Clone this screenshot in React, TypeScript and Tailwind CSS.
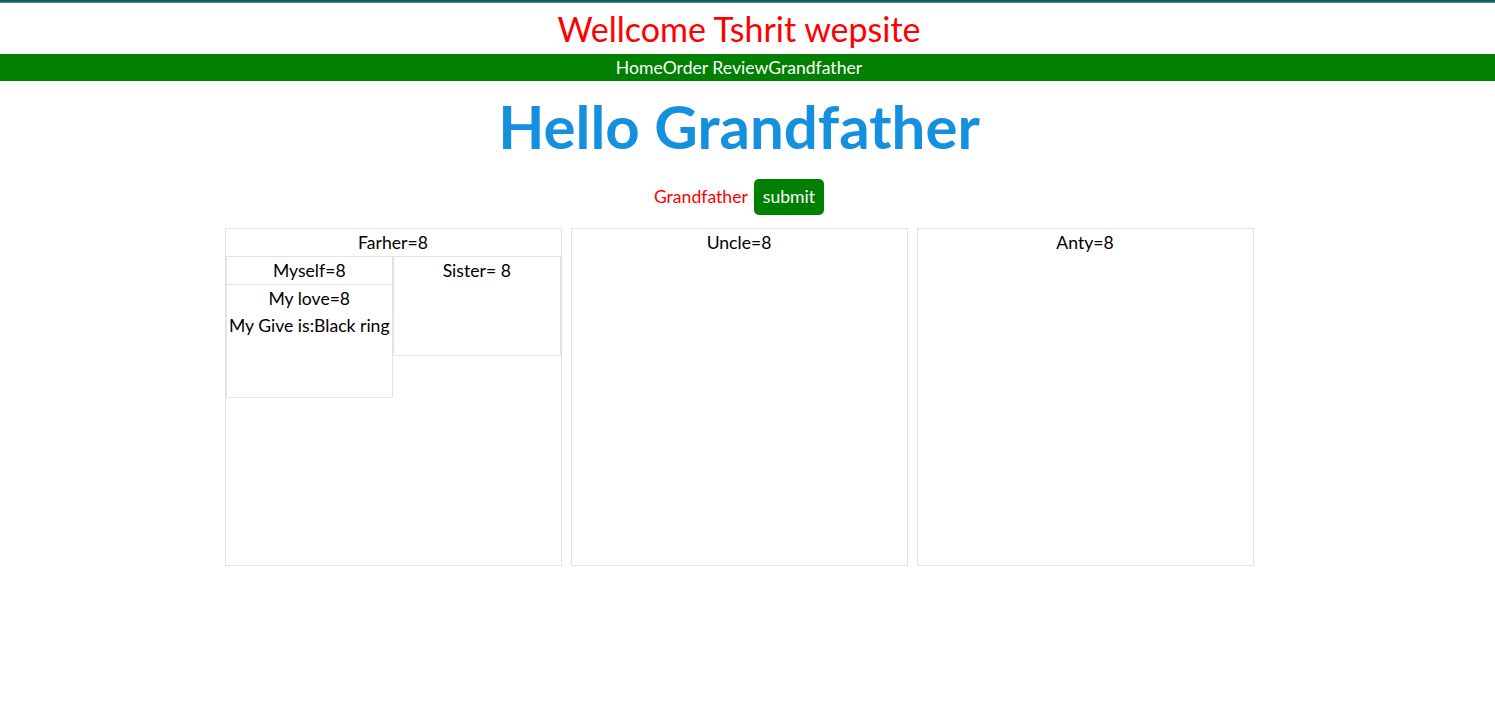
export default function App() {
  return (
    <div className="min-h-screen bg-white font-['Lato','Open_Sans',sans-serif] text-black">
      {/* top line */}
      <div className="h-[2px] bg-[#0f5d68]" />
      <div className="h-px bg-[#4f8f98]" />

      <header className="flex h-[51px] items-center justify-center pr-[17px]">
        <h2 className="text-[34px] leading-none text-[#ff0000]">Wellcome Tshrit wepsite</h2>
      </header>

      <nav className="flex h-[27px] items-center justify-center bg-[#008000] pr-[17px] text-[17.6px] leading-none text-white">
        <a>Home</a>
        <a>Order Review</a>
        <a>Grandfather</a>
      </nav>

      <main className="pr-[17px]">
        <div className="flex h-[89px] items-center justify-center">
          <h1 className="text-[60px] font-bold leading-none text-[#1590df]">Hello Grandfather</h1>
        </div>

        <div className="mt-[9px] flex h-[36px] items-center justify-center gap-[6px] text-[17.6px]">
          <span className="text-[#ff0000]">Grandfather</span>
          <button type="button" className="h-[36px] rounded-[5px] bg-[#008000] px-[9px] text-white">
            submit
          </button>
        </div>

        <div className="mt-[13px] flex justify-center gap-[9px] text-[17.6px] leading-[27px]">
          {/* Father */}
          <div className="h-[338px] w-[337px] border border-[#e3e3e3] text-center">
            <div>Farher=8</div>
            <div className="flex">
              <div className="h-[142px] w-1/2 border border-[#e3e3e3]">
                <div>Myself=8</div>
                <div className="border-t border-[#e3e3e3]">
                  <div>My love=8</div>
                  <div>My Give is:Black ring</div>
                </div>
              </div>
              <div className="h-[100px] w-1/2 border border-[#e3e3e3]">
                <div>Sister= 8</div>
              </div>
            </div>
          </div>

          <div className="h-[338px] w-[337px] border border-[#e3e3e3] text-center">
            <div>Uncle=8</div>
          </div>

          <div className="h-[338px] w-[337px] border border-[#e3e3e3] text-center">
            <div>Anty=8</div>
          </div>
        </div>
      </main>
    </div>
  )
}
